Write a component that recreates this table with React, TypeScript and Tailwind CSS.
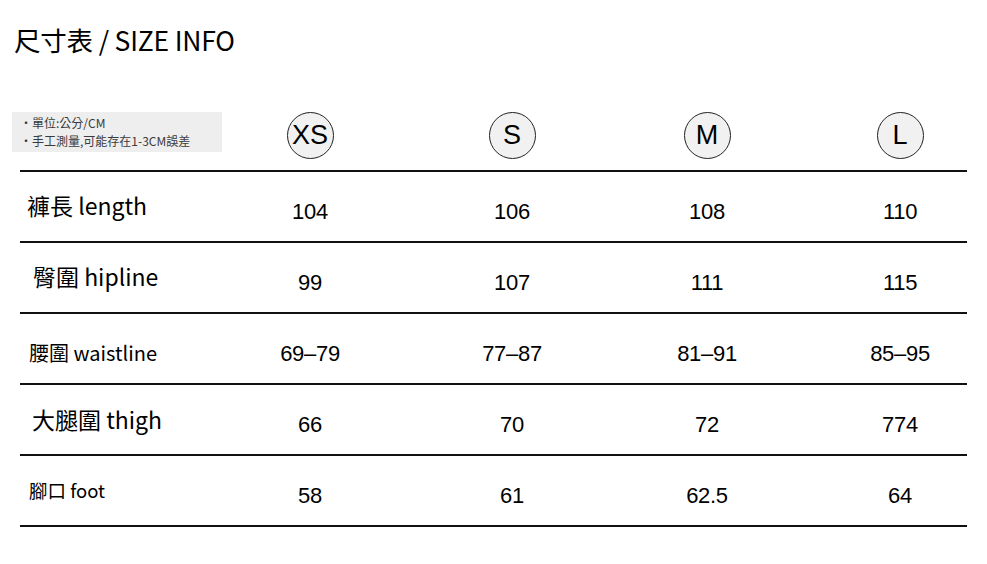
const cjk = { fontFamily: '"Noto Sans CJK TC", "Noto Sans", sans-serif' };
const arial = { fontFamily: '"Liberation Sans", Arial, sans-serif' };

const cols = "grid grid-cols-[157px_266px_138px_252px_134px]";

const sizes = ["XS", "S", "M", "L"];

const rows = [
  { label: "褲長 length", cls: "pl-[7px] text-[23px] -mt-[2px]", values: ["104", "106", "108", "110"] },
  { label: "臀圍 hipline", cls: "pl-[13px] text-[23px] -mt-[2px]", values: ["99", "107", "111", "115"] },
  { label: "腰圍 waistline", cls: "pl-[9px] text-[20px] pt-[9px]", values: ["69–79", "77–87", "81–91", "85–95"] },
  { label: "大腿圍 thigh", cls: "pl-[12px] text-[23px]", values: ["66", "70", "72", "774"] },
  { label: "腳口 foot", cls: "pl-[9px] text-[18.5px]", values: ["58", "61", "62.5", "64"] },
];

const SizeBadge = ({ size }: { size: string }) => (
  <div
    className="flex h-[47px] w-[47px] items-center justify-center rounded-full border border-[#222] bg-[#f1f1f1] text-[27px] leading-none text-black"
    style={arial}
  >
    {size}
  </div>
);

export default function App() {
  return (
    <div className="h-[564px] w-[987px] bg-white text-[#111]" style={cjk}>
      <h1 className="pl-[14px] pt-[24px] text-[26.5px] leading-[32px] tracking-[-0.2px] text-black">
        尺寸表 / SIZE INFO
      </h1>

      <div className="ml-[20px] mt-[44px] w-[947px]">
        <div className={`${cols} h-[72px] items-center border-b-2 border-[#111]`}>
          <div className="-ml-2 -mt-[6px] w-[210px] whitespace-nowrap bg-[#eeeeee] py-[2px] pl-[8px] text-[12px] leading-[18px] text-[#3a3a3a]">
            <div>・單位:公分/CM</div>
            <div>・手工測量,可能存在1-3CM誤差</div>
          </div>
          {sizes.map((s) => (
            <div key={s} className="flex justify-center">
              <SizeBadge size={s} />
            </div>
          ))}
        </div>

        {rows.map((r) => (
          <div
            key={r.label}
            className={`${cols} box-border h-[71px] items-center border-b-2 border-[#111]`}
          >
            <div className={`whitespace-nowrap text-black ${r.cls}`}>{r.label}</div>
            {r.values.map((v, i) => (
              <div
                key={i}
                className="pt-[10px] text-center text-[22px] tracking-[-0.3px] text-black"
                style={arial}
              >
                {v}
              </div>
            ))}
          </div>
        ))}
      </div>
    </div>
  );
}
